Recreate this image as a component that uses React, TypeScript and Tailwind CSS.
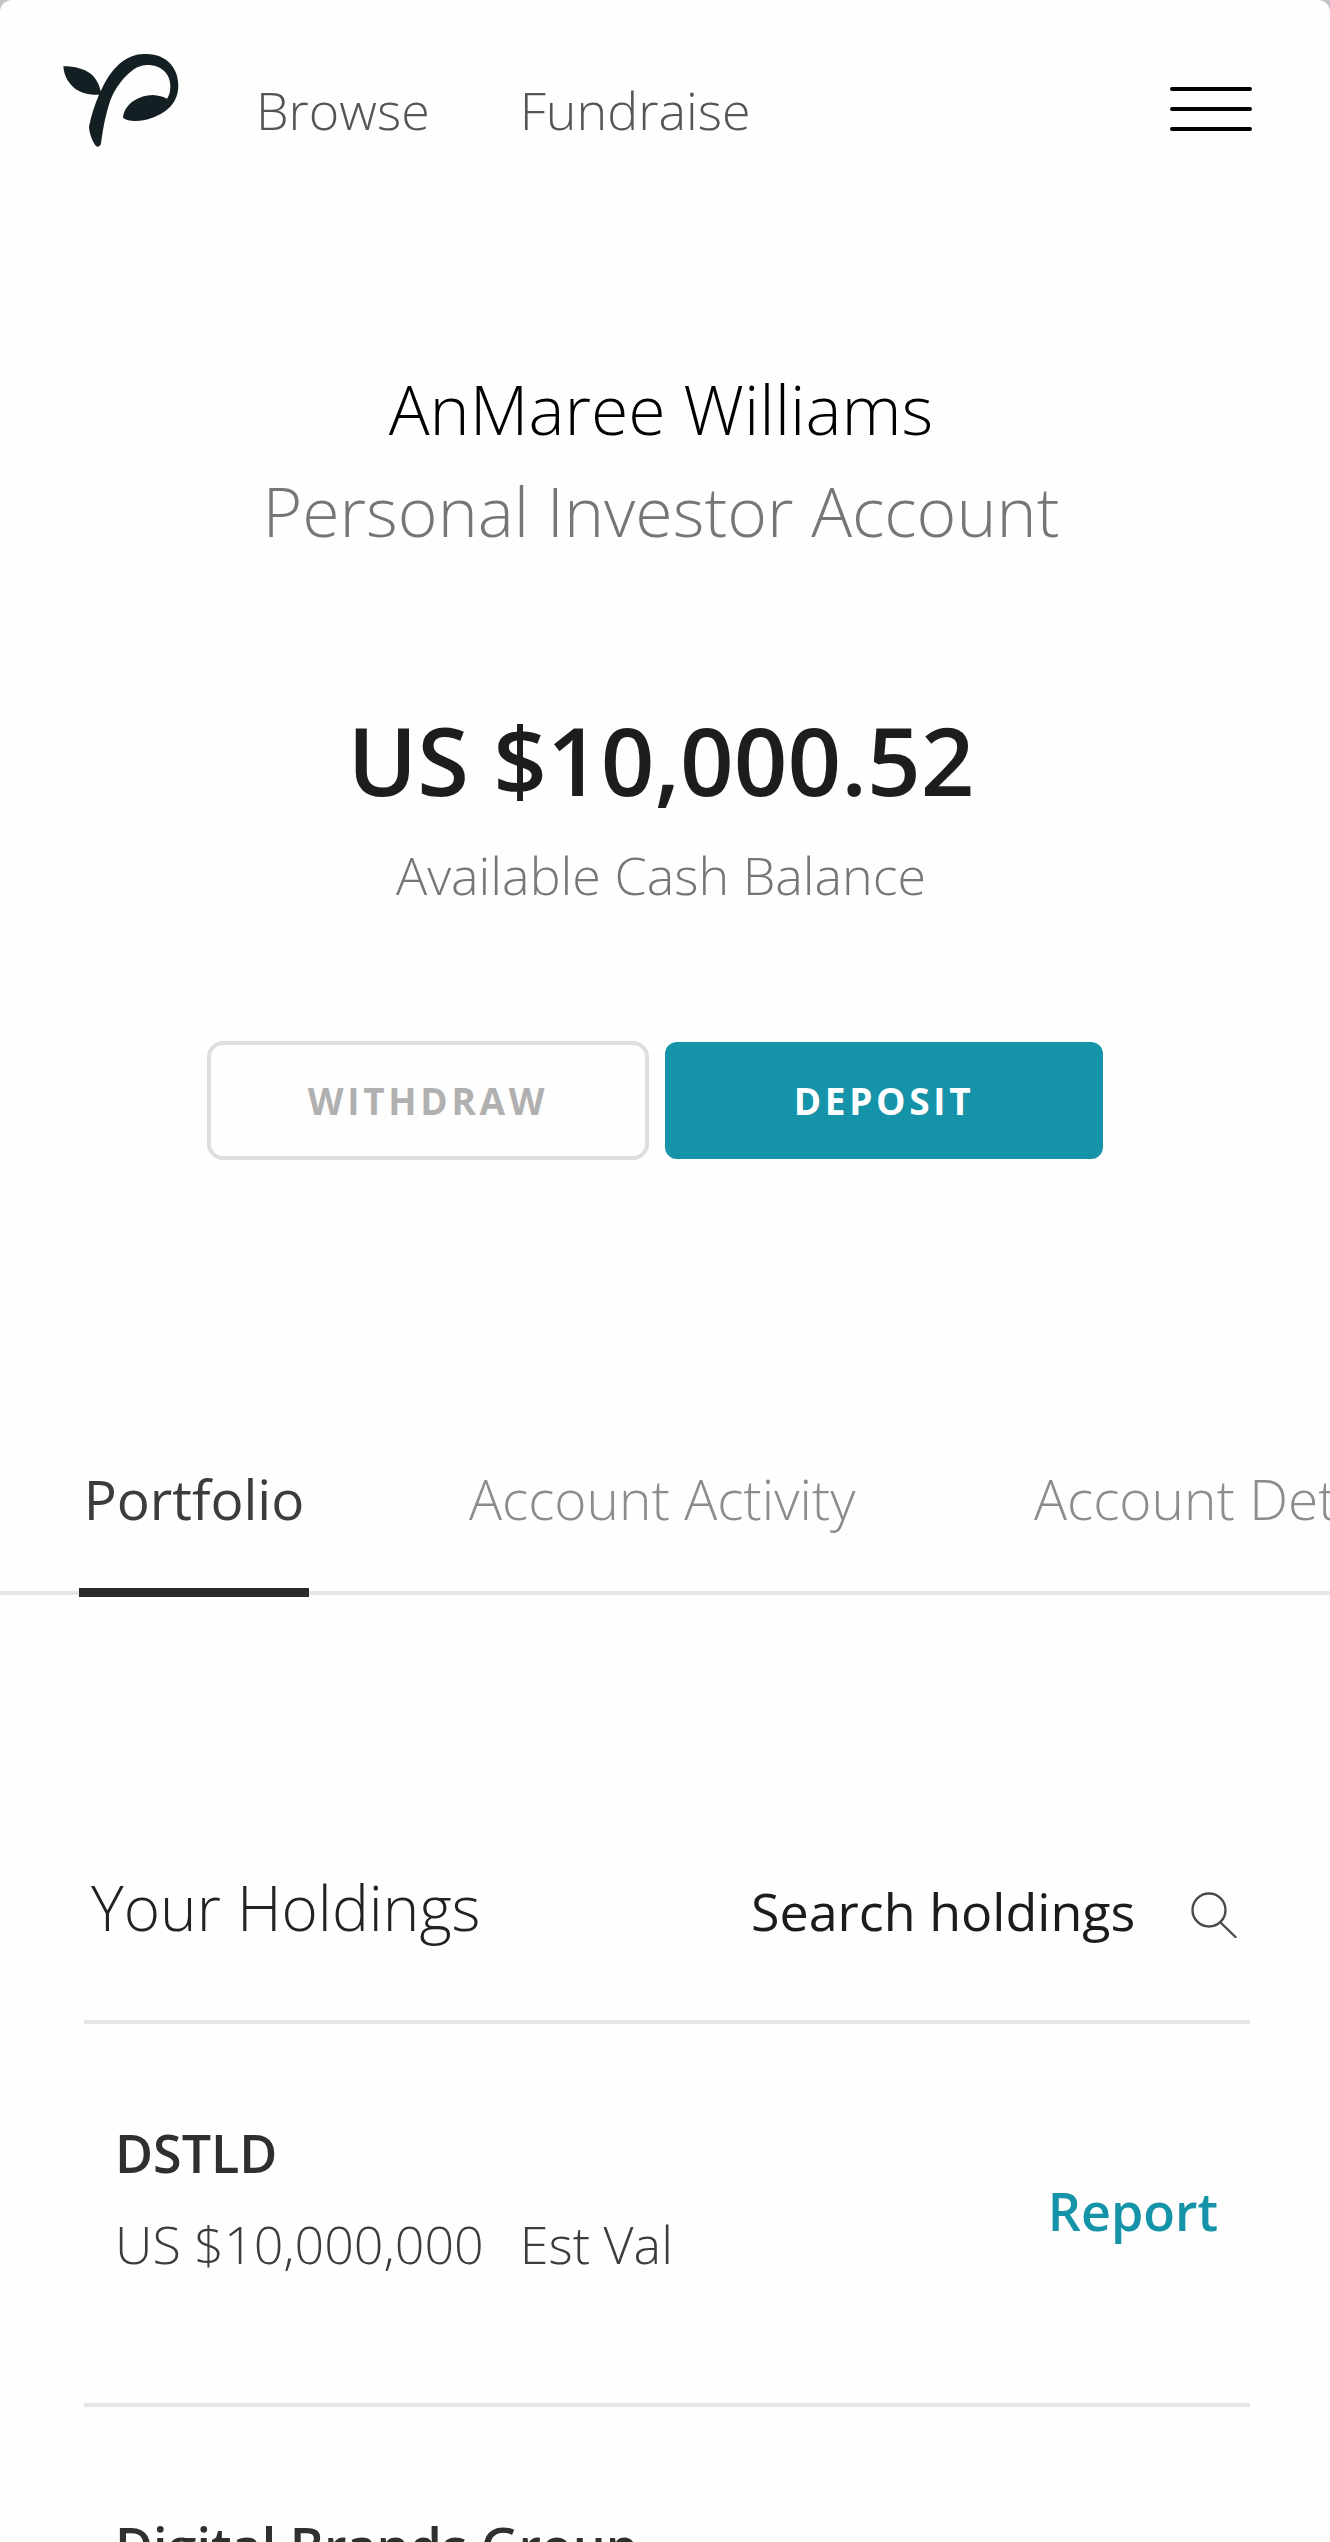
import type { ReactNode } from "react";

function Logo() {
  return (
    <svg className="h-[112px] w-[116px]" viewBox="189 162 348 336" fill="#141f24" aria-hidden="true">
      <path d="M190 199C226 199 252 207 270 220C288 234 298 254 302 274C322 230 342 204 368 184C390 168 413 161 440 162C500 163 535 204 535 256C535 290 521 316 495 334C468 352 438 363 408 363C390 363 376 359 369 353C371 332 383 315 400 303C418 291 438 285 458 285C476 286 490 290 501 296C508 287 511 275 511 256C510 220 483 195 442 195C412 195 388 215 364 244C345 267 332 293 325 320C312 365 308 395 303 430C301 440 293 443 288 438C277 424 268 400 267 380C274 345 284 315 297 284C264 285 240 278 222 263C203 247 192 226 190 199Z" />
    </svg>
  );
}

function MenuIcon() {
  return (
    <svg className="h-[46px] w-[82px]" viewBox="0 0 82 46" stroke="#000" strokeWidth="4" strokeLinecap="round" aria-hidden="true">
      <path d="M2 2H80M2 22H80M2 42H80" />
    </svg>
  );
}

function SearchIcon() {
  return (
    <svg className="h-[54px] w-[46px] shrink-0" viewBox="0 -8 46 54" fill="none" stroke="#4a4a4a" strokeWidth="2.4" strokeLinecap="round" aria-hidden="true">
      <circle cx="18" cy="18" r="16.5" />
      <path d="M29.5 30.5L44.5 45" />
    </svg>
  );
}

function NavLink({ children }: { children: ReactNode }) {
  return (
    <a href="#" className="text-[52px] leading-[64px] font-light text-[#555555]">
      {children}
    </a>
  );
}

function Holding({ name, value }: { name: string; value: string }) {
  return (
    <li className="flex items-center justify-between border-b-4 border-[#e6e6e6] pt-[107px] pr-8 pb-[127px] pl-[31px] first:pt-[97px]">
      <div className="flex flex-col gap-[27px]">
        <h3 className="text-[52px] leading-[64px] font-semibold text-[#2f2f2f]">{name}</h3>
        <p className="flex gap-9 text-[52px] leading-[64px] font-light text-[#3c3c3c]">
          <span>{value}</span>
          <span>Est Val</span>
        </p>
      </div>
      <a href="#" className="pt-6 text-[52px] leading-[64px] font-semibold text-[#1593a8]">
        Report
      </a>
    </li>
  );
}

export default function App() {
  return (
    <div className="h-screen overflow-hidden bg-[#c4c4c6] font-['Open_Sans',sans-serif]">
      <div className="min-h-full rounded-t-xl bg-[#fefefe]">
        <header className="flex items-center justify-between pt-[54px] pr-[78px] pl-[63px]">
          <div className="flex items-center gap-[77px]">
            <a href="#" aria-label="Home">
              <Logo />
            </a>
            <nav className="flex gap-[90px]">
              <NavLink>Browse</NavLink>
              <NavLink>Fundraise</NavLink>
            </nav>
          </div>
          <button type="button" aria-label="Menu">
            <MenuIcon />
          </button>
        </header>

        <section className="mt-[192px] pr-2 text-center">
          <h1 className="text-[68px] leading-[102px] font-light text-black">AnMaree Williams</h1>
          <p className="text-[68px] leading-[102px] font-light text-[#767676]">Personal Investor Account</p>
          <p className="mt-[143px] text-[94px] leading-[110px] font-semibold text-[#1c1d1f]">US $10,000.52</p>
          <p className="mt-7 text-[52px] leading-[64px] font-light text-[#767676]">Available Cash Balance</p>
          <div className="mt-[134px] flex items-center justify-center gap-4 pr-3">
            <button type="button" className="h-[119px] w-[442px] rounded-2xl border-4 border-[#dedede] text-[37px] font-bold tracking-widest text-[#b0b0b0]">
              WITHDRAW
            </button>
            <button type="button" className="h-[117px] w-[438px] rounded-xl bg-[#1593a8] text-[37px] font-bold tracking-widest text-white">
              DEPOSIT
            </button>
          </div>
        </section>

        <div role="tablist" className="relative mt-[307px] ml-1 flex border-b-4 border-[#e6e6e6] pl-[75px] text-[55px] leading-[64px] whitespace-nowrap before:absolute before:top-full before:-left-1 before:size-1 before:bg-[#e6e6e6]">
          <button type="button" role="tab" aria-selected="true" className="relative mr-[160px] min-w-[230px] shrink-0 pb-[60px] text-[#3c3c3c] after:absolute after:inset-x-0 after:-bottom-[6px] after:h-[9px] after:bg-[#2a2a2a]">
            Portfolio
          </button>
          <button type="button" role="tab" aria-selected="false" className="mr-[165px] min-w-[400px] shrink-0 pb-[60px] text-left font-light text-[#8c8c8c]">
            Account Activity
          </button>
          <div className="min-w-0 flex-1 overflow-hidden">
            <button type="button" role="tab" aria-selected="false" className="pb-[60px] font-light text-[#8c8c8c]">
              Account Details
            </button>
          </div>
        </div>

        <main className="mt-[276px] mr-20 ml-[84px]">
          <div className="flex items-center justify-between border-b-4 border-[#e6e6e6] pr-[13px] pb-[77px] pl-[7px]">
            <h2 className="text-[62px] leading-[72px] font-light text-[#222222]">Your Holdings</h2>
            <label className="flex items-center gap-10 pt-2">
              <input type="text" aria-label="Search holdings" placeholder="Search holdings" className="h-16 w-[400px] text-[52px] leading-[64px] text-[#1c1c1c] outline-none placeholder:text-[#1c1c1c]" />
              <SearchIcon />
            </label>
          </div>
          <ul>
            <Holding name="DSTLD" value="US $10,000,000" />
            <Holding name="Digital Brands Group" value="US $10,000,000" />
          </ul>
        </main>
      </div>
    </div>
  );
}
